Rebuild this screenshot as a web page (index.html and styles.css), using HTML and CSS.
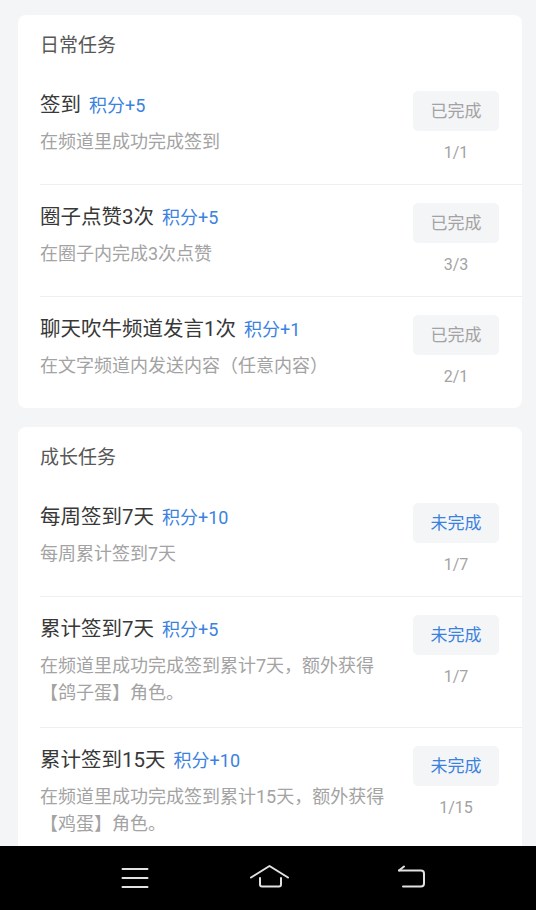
FILE: index.html
```html
<!DOCTYPE html>
<html lang="zh-CN">
<head>
    <meta charset="UTF-8">
    <meta name="viewport" content="width=device-width, initial-scale=1.0">
    <title>任务中心</title>
    <link rel="stylesheet" href="styles.css">
</head>
<body>
    <div id="tasks">
        <div class="card">
            <div class="card-title">日常任务</div>
            <div class="task">
                <div class="task-info">
                    <div class="task-name">签到<span class="points">积分+5</span></div>
                    <div class="task-desc">在频道里成功完成签到</div>
                </div>
                <div class="task-state">
                    <div class="state-btn done">已完成</div>
                    <div class="progress">1/1</div>
                </div>
            </div>
            <div class="task">
                <div class="task-info">
                    <div class="task-name">圈子点赞3次<span class="points">积分+5</span></div>
                    <div class="task-desc">在圈子内完成3次点赞</div>
                </div>
                <div class="task-state">
                    <div class="state-btn done">已完成</div>
                    <div class="progress">3/3</div>
                </div>
            </div>
            <div class="task">
                <div class="task-info">
                    <div class="task-name">聊天吹牛频道发言1次<span class="points">积分+1</span></div>
                    <div class="task-desc">在文字频道内发送内容（任意内容）</div>
                </div>
                <div class="task-state">
                    <div class="state-btn done">已完成</div>
                    <div class="progress">2/1</div>
                </div>
            </div>
        </div>

        <div class="card">
            <div class="card-title">成长任务</div>
            <div class="task">
                <div class="task-info">
                    <div class="task-name">每周签到7天<span class="points">积分+10</span></div>
                    <div class="task-desc">每周累计签到7天</div>
                </div>
                <div class="task-state">
                    <div class="state-btn todo">未完成</div>
                    <div class="progress">1/7</div>
                </div>
            </div>
            <div class="task">
                <div class="task-info">
                    <div class="task-name">累计签到7天<span class="points">积分+5</span></div>
                    <div class="task-desc">在频道里成功完成签到累计7天，额外获得【鸽子蛋】角色。</div>
                </div>
                <div class="task-state">
                    <div class="state-btn todo">未完成</div>
                    <div class="progress">1/7</div>
                </div>
            </div>
            <div class="task">
                <div class="task-info">
                    <div class="task-name">累计签到15天<span class="points">积分+10</span></div>
                    <div class="task-desc">在频道里成功完成签到累计15天，额外获得【鸡蛋】角色。</div>
                </div>
                <div class="task-state">
                    <div class="state-btn todo">未完成</div>
                    <div class="progress">1/15</div>
                </div>
            </div>
        </div>
    </div>

    <div id="navbar">
        <svg class="nav-icon menu" width="40" height="30" viewBox="0 0 40 30">
            <path d="M7.5 6H32.5M7.5 15H32.5M7.5 24H32.5" />
        </svg>
        <svg class="nav-icon home" width="40" height="30" viewBox="0 0 40 30">
            <path d="M1 14.5L19.5 3L38 14.5" />
            <path d="M10 15V21.5Q10 23.5 12 23.5H29Q31 23.5 31 21.5V15" />
        </svg>
        <svg class="nav-icon back" width="40" height="30" viewBox="0 0 40 30">
            <path d="M8 7.5H30Q33 7.5 33 10.5V20.5Q33 23.5 30 23.5H12" />
            <path d="M8 7.5L13 3.5" />
        </svg>
    </div>
</body>
</html>
```

FILE: styles.css
```css
body {
    font-family: Roboto, "Noto Sans CJK SC", sans-serif;
    margin: 0;
    padding: 0;
    background-color: #f4f5f7;
}
#tasks {
    display: flex;
    flex-direction: column;
    gap: 19px;
    padding: 15px 14px 80px 18px;
}
.card {
    background-color: #fff;
    border-radius: 8px;
    padding-left: 22px;
}
.card-title {
    padding: 18px 0 14px;
    font-size: 19px;
    line-height: 26px;
    color: #585858;
}
.task {
    display: flex;
    justify-content: space-between;
    padding: 18px 23px 21px 0;
    border-bottom: 1px solid #eeeff1;
}
.task:last-child {
    border-bottom: none;
}
.task-info {
    flex: 1;
    max-width: 362px;
}
.task-name {
    padding-top: 1px;
    font-size: 20.5px;
    line-height: 26px;
    color: #383838;
}
.points {
    margin-left: 8px;
    font-size: 18px;
    color: #3b82e0;
}
.task-desc {
    margin-top: 9px;
    font-size: 18px;
    line-height: 27px;
    color: #a3a3a3;
}
.task-state {
    display: flex;
    flex-direction: column;
    align-items: center;
    width: 86px;
}
.state-btn {
    width: 86px;
    height: 40px;
    line-height: 40px;
    text-align: center;
    font-size: 17px;
    background-color: #f4f5f7;
    border-radius: 5px;
}
.state-btn.done {
    color: #a3a3a3;
}
.state-btn.todo {
    color: #3b82e0;
}
.progress {
    margin-top: 11px;
    font-size: 16px;
    line-height: 21px;
    color: #a3a3a3;
}
#navbar {
    position: fixed;
    left: 0;
    right: 0;
    bottom: 0;
    height: 64px;
    background-color: #000;
    display: flex;
    align-items: center;
    padding-left: 115px;
}
.nav-icon {
    fill: none;
    stroke: #e2e2e2;
    stroke-width: 2;
    stroke-linecap: round;
    stroke-linejoin: round;
}
.nav-icon.home {
    margin-left: 95px;
}
.nav-icon.back {
    margin-left: 101px;
}
```
